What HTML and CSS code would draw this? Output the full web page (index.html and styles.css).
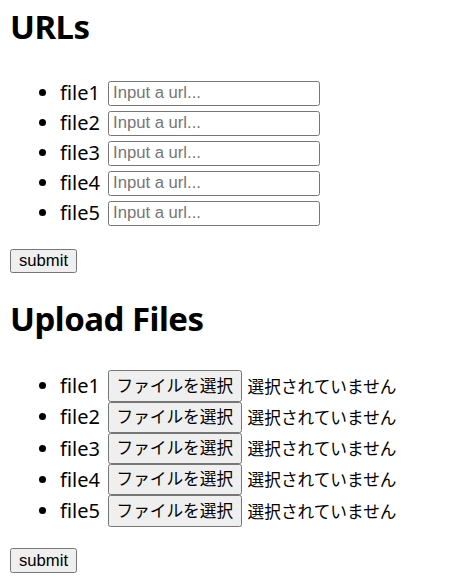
FILE: index.html
```html
<!DOCTYPE html>
<html lang="ja">
<head>
<meta charset="utf-8">
<title>URLs</title>
<link rel="stylesheet" href="styles.css">
</head>
<body>
<section class="block">
  <h1 class="title first">URLs</h1>
  <ul class="list">
    <li class="item"><span class="label">file1</span><input class="url" type="text" placeholder="Input a url..."></li>
    <li class="item"><span class="label">file2</span><input class="url" type="text" placeholder="Input a url..."></li>
    <li class="item"><span class="label">file3</span><input class="url" type="text" placeholder="Input a url..."></li>
    <li class="item"><span class="label">file4</span><input class="url" type="text" placeholder="Input a url..."></li>
    <li class="item"><span class="label">file5</span><input class="url" type="text" placeholder="Input a url..."></li>
  </ul>
  <button class="submit" type="button">submit</button>
</section>
<section class="block">
  <h1 class="title second">Upload Files</h1>
  <ul class="list files">
    <li class="item file"><span class="label">file1</span><button class="file-btn" type="button">ファイルを選択</button><span class="status">選択されていません</span></li>
    <li class="item file"><span class="label">file2</span><button class="file-btn" type="button">ファイルを選択</button><span class="status">選択されていません</span></li>
    <li class="item file"><span class="label">file3</span><button class="file-btn" type="button">ファイルを選択</button><span class="status">選択されていません</span></li>
    <li class="item file"><span class="label">file4</span><button class="file-btn" type="button">ファイルを選択</button><span class="status">選択されていません</span></li>
    <li class="item file"><span class="label">file5</span><button class="file-btn" type="button">ファイルを選択</button><span class="status">選択されていません</span></li>
  </ul>
  <button class="submit last" type="button">submit</button>
</section>
</body>
</html>
```
FILE: styles.css
```css
html, body {
  margin: 0;
  padding: 0;
  background: #fff;
}
body {
  padding: 0 10px;
  color: #000;
  font-family: "Noto Sans", "Noto Sans CJK JP", sans-serif;
}
.block {
  display: block;
}
.title {
  margin: 0;
  font-size: 33px;
  line-height: 40px;
  font-weight: 700;
  letter-spacing: -0.5px;
}
.title.first {
  padding-top: 7.2px;
}
.title.second {
  margin-top: 25.2px;
}
.list {
  list-style: none;
  margin: 31.3px 0 20.5px;
  padding: 0;
}
.list.files {
  margin: 31.8px 0 21.75px;
}
.item {
  display: flex;
  align-items: center;
  height: 30px;
  font-size: 20px;
}
.item.file {
  height: 31.25px;
}
.item::before {
  content: "";
  flex: none;
  width: 7px;
  height: 7px;
  border-radius: 50%;
  background: #000;
  margin: -1px 14px 0 29px;
}
.label {
  flex: none;
  width: 40px;
  line-height: 30px;
}
.url {
  box-sizing: border-box;
  width: 212px;
  height: 25.5px;
  margin: 0 0 0 8px;
  padding: 0 4px;
  border: 1px solid #767676;
  border-radius: 2.5px;
  background: #fff;
  font-family: "Liberation Sans", Arial, sans-serif;
  font-size: 16.67px;
  color: #000;
  outline: none;
}
.url::placeholder {
  color: #757575;
}
.submit {
  display: block;
  box-sizing: border-box;
  height: 24.5px;
  margin: 0;
  padding: 0 8px;
  border: 1px solid #767676;
  border-radius: 2.5px;
  background: #efefef;
  color: #000;
  font-family: "Liberation Sans", Arial, sans-serif;
  font-size: 16.67px;
  line-height: 22px;
}
.file-btn {
  flex: none;
  box-sizing: border-box;
  height: 31.25px;
  margin: 0 0 0 8px;
  padding: 0 7.5px;
  border: 1px solid #767676;
  border-radius: 2.5px;
  background: #efefef;
  color: #000;
  font-family: "Liberation Sans", "Noto Sans CJK JP", sans-serif;
  font-size: 16.67px;
  line-height: 25px;
}
.status {
  margin-left: 6px;
  font-family: "Noto Sans CJK JP", sans-serif;
  font-size: 16.67px;
  line-height: 25px;
}
```
